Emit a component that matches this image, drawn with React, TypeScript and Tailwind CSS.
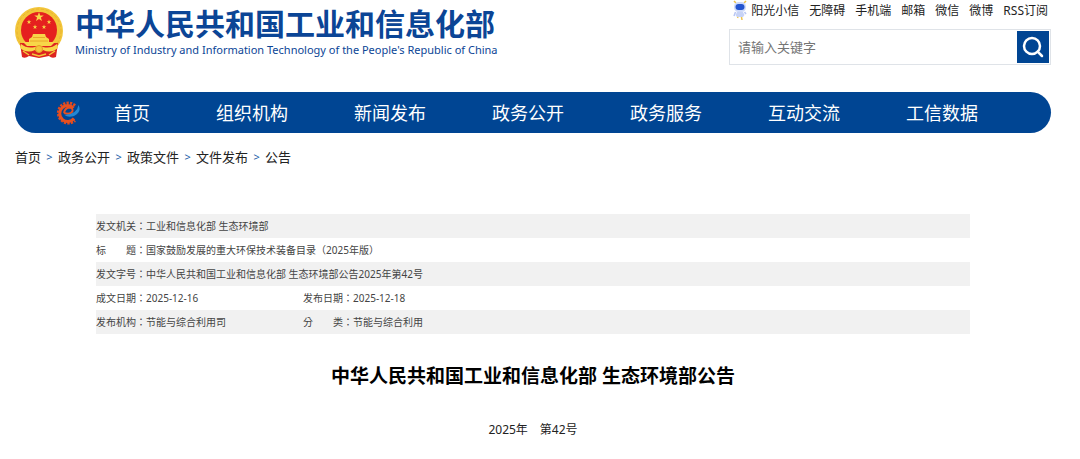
import { Search } from "lucide-react";

const TOP_LINKS = ["无障碍", "手机端", "邮箱", "微信", "微博", "RSS订阅"];

const NAV_ITEMS = ["首页", "组织机构", "新闻发布", "政务公开", "政务服务", "互动交流", "工信数据"];

const CRUMBS = ["首页", "政务公开", "政策文件", "文件发布", "公告"];

// Each row holds one or two label/value pairs; a single pair spans the whole row.
const META_ROWS = [
  [["发文机关：", "工业和信息化部 生态环境部"]],
  [["标　　题：", "国家鼓励发展的重大环保技术装备目录（2025年版）"]],
  [["发文字号：", "中华人民共和国工业和信息化部 生态环境部公告2025年第42号"]],
  [
    ["成文日期：", "2025-12-16"],
    ["发布日期：", "2025-12-18"],
  ],
  [
    ["发布机构：", "节能与综合利用司"],
    ["分　　类：", "节能与综合利用"],
  ],
];

const STAR = "M0 -1L0.24 -0.32L0.95 -0.31L0.38 0.12L0.59 0.81L0 0.4L-0.59 0.81L-0.38 0.12L-0.95 -0.31L-0.24 -0.32Z";

function Emblem() {
  return (
    <svg viewBox="0 0 48 53" className="h-[53px] w-12 shrink-0" aria-hidden="true">
      <circle cx="24" cy="25" r="24" fill="#f3c63a" />
      <circle cx="24" cy="25" r="22" fill="none" stroke="#e9b432" strokeWidth="1" strokeDasharray="3 2" />
      <path d="M5 37L43 37L41 51Q37 53 34 50L24 52L14 50Q10 53 7 51Z" fill="#dd2420" />
      <circle cx="24" cy="24" r="18" fill="#e5201f" />
      <g fill="#f8d648">
        <path d={STAR} transform="translate(24 11) scale(5)" />
        <path d={STAR} transform="translate(14 16) scale(2.4)" />
        <path d={STAR} transform="translate(34 16) scale(2.4)" />
        <path d={STAR} transform="translate(20 21) scale(2.4)" />
        <path d={STAR} transform="translate(29 21) scale(2.4)" />
        <path d="M18 28L30 28L31 31L34 33L34 36L40 36L36 40L12 40L8 36L14 36L14 33L17 31Z" />
        <path d="M6 38Q12 43 20 41L24 39L28 41Q36 43 42 38L43 42Q36 48 28 44L24 47L20 44Q12 48 5 42Z" />
      </g>
      <path d="M18 31.500H30M15 35H33" stroke="#e79a25" strokeWidth="0.8" />
      <circle cx="24" cy="43" r="3.500" fill="#f3c63a" stroke="#e79a25" />
      <path d="M8 45L14 49M40 45L34 49M17 48L24 50L31 48" stroke="#f3c63a" strokeWidth="1.500" fill="none" />
    </svg>
  );
}

function GearLogo() {
  return (
    <svg viewBox="0 0 26 26" className="size-[26px]" aria-hidden="true">
      <path d="M20 5.500A10 10 0 1 0 20 20.500" fill="none" stroke="#e04a20" strokeWidth="3" strokeDasharray="2.200 1.200" />
      <path d="M18.500 8A8 8 0 1 0 19 18.500" fill="none" stroke="#e8501f" strokeWidth="3" />
      <path d="M9 13Q16 15 17.500 11Q18 7.500 14 7.500Q10 8 9 13" fill="none" stroke="#e8501f" strokeWidth="2" />
      <path d="M23.500 5Q27 12 19 16Q13 18 9.500 15Q15 15 19.500 12Q23 9 23.500 5Z" fill="#2387d3" />
    </svg>
  );
}

function Mascot() {
  return (
    <svg viewBox="0 0 14 21" className="h-[21px] w-3.5" aria-hidden="true">
      <path d="M3 3L1 1M11 3L13 1" stroke="#f0c445" strokeWidth="1.500" />
      <rect x="1" y="2" width="12" height="10" rx="4.500" fill="#cfdaf8" />
      <rect x="2.500" y="4" width="9" height="6" rx="3" fill="#2555cf" />
      <path d="M4 12H10L11.500 15L10 17H4L2.500 15Z" fill="#c7d3f6" />
      <path d="M2.500 12L1 16M11.500 12L13 14" stroke="#b8c6f3" strokeWidth="1.500" />
      <path d="M5 17L4.500 18M8.500 17L9 20" stroke="#edc34c" strokeWidth="1.500" />
    </svg>
  );
}

export default function App() {
  return (
    <div className="bg-white pr-[29px] pl-[15px] pb-5 font-['Noto_Sans','Noto_Sans_CJK_SC',sans-serif] text-[#222]">
      <header className="flex h-[92px] items-start justify-between">
        <a href="#" className="flex items-start gap-3 pt-1.5 text-[#0b4596]">
          <Emblem />
          <span className="block">
            <span className="block text-[30px] leading-9 font-bold whitespace-nowrap">
              中华人民共和国工业和信息化部
            </span>
            <span className="block text-[11px] leading-4 whitespace-nowrap">
              Ministry of Industry and Information Technology of the People's Republic of China
            </span>
          </span>
        </a>

        <div className="w-[322px]">
          <div className="flex h-[29px] items-start justify-end gap-2.5 pr-[3px] text-xs leading-[22px] whitespace-nowrap">
            <a href="#" className="flex items-start gap-1">
              <Mascot />
              阳光小信
            </a>
            {TOP_LINKS.map((label) => (
              <a key={label} href="#">
                {label}
              </a>
            ))}
          </div>
          <form className="flex h-9 items-center border border-[#dfe3e8] pr-px" onSubmit={(e) => e.preventDefault()}>
            <input
              type="text"
              aria-label="请输入关键字"
              placeholder="请输入关键字"
              className="h-full min-w-0 flex-1 px-2 text-[13px] placeholder-[#757575] focus:outline-none"
            />
            <button type="submit" aria-label="搜索" className="flex size-8 items-center justify-center bg-[#004593] text-white">
              <Search className="size-6" strokeWidth={2.5} />
            </button>
          </form>
        </div>
      </header>

      <nav className="flex h-[41px] items-center rounded-full bg-[#004593] pl-10 text-lg text-white">
        <a href="#" aria-label="工信微报" className="mr-[33px]">
          <GearLogo />
        </a>
        <ul className="flex gap-[66px] whitespace-nowrap">
          {NAV_ITEMS.map((item) => (
            <li key={item}>
              <a href="#">{item}</a>
            </li>
          ))}
        </ul>
      </nav>

      <ol className="flex pt-3.5 text-[13px] leading-5">
        {CRUMBS.map((crumb, i) => (
          <li key={crumb} className="flex">
            {i > 0 && <span className="w-[17px] text-center text-[11px] text-[#1d5ea8]">&gt;</span>}
            <a href="#">{crumb}</a>
          </li>
        ))}
      </ol>

      <main className="px-[81px] pt-[47px]">
        <table className="w-full table-fixed text-left text-[10px] leading-6 text-[#444]">
          <colgroup>
            <col className="w-[50px]" />
            <col className="w-[157px]" />
            <col className="w-[50px]" />
            <col />
          </colgroup>
          <tbody>
            {META_ROWS.map((pairs) => (
              <tr key={pairs[0][0]} className="odd:bg-[#f1f1f1]">
                {pairs.map(([label, value]) => [
                  <th
                    key={label}
                    scope="row"
                    className="p-0 font-['Noto_Sans','Noto_Sans_CJK_TC',sans-serif] font-normal whitespace-nowrap"
                  >
                    {label}
                  </th>,
                  <td key={value} colSpan={pairs.length === 1 ? 3 : 1} className="p-0">
                    {value}
                  </td>,
                ])}
              </tr>
            ))}
          </tbody>
        </table>

        <h1 className="pt-7 text-center text-[19px] leading-7 font-bold text-black">
          中华人民共和国工业和信息化部 生态环境部公告
        </h1>
        <p className="pt-[30px] text-center text-xs leading-5">2025年　第42号</p>
      </main>
    </div>
  );
}
